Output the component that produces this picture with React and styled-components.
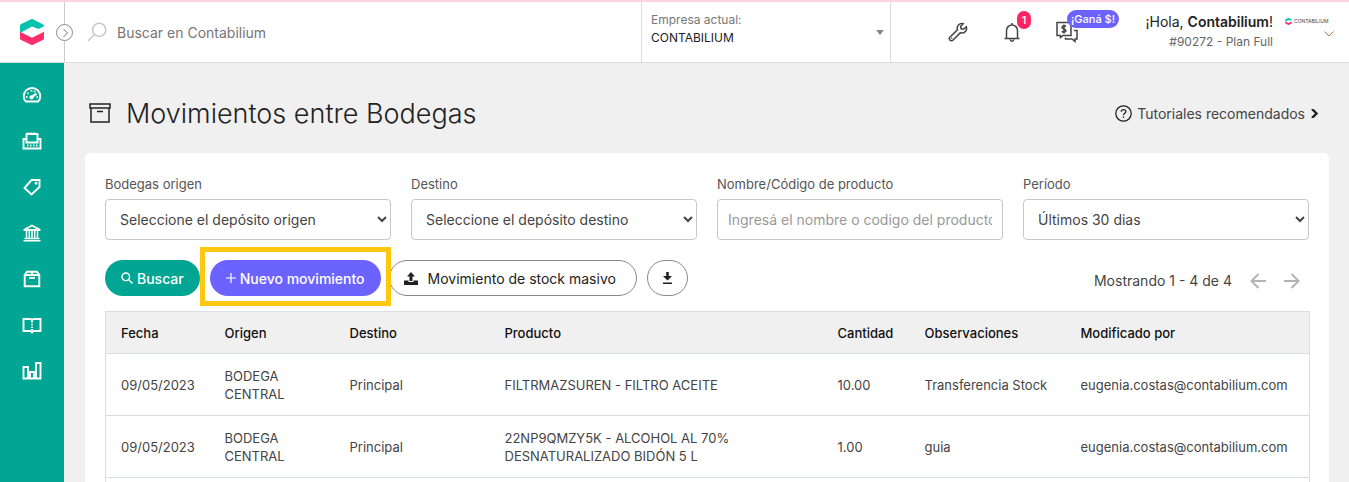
import React, { useState } from 'react';
import styled, { createGlobalStyle, css } from 'styled-components';

const filters = [
  { id: 'origen', label: 'Bodegas origen', options: ['Seleccione el depósito origen', 'BODEGA CENTRAL', 'Principal'] },
  { id: 'destino', label: 'Destino', options: ['Seleccione el depósito destino', 'BODEGA CENTRAL', 'Principal'] },
  { id: 'producto', label: 'Nombre/Código de producto', placeholder: 'Ingresá el nombre o codigo del producto' },
  { id: 'periodo', label: 'Período', options: ['Últimos 30 dias', 'Últimos 15 dias', 'Últimos 7 dias'] },
];

const columns = [
  { title: 'Fecha', width: 104 },
  { title: 'Origen', width: 125 },
  { title: 'Destino', width: 155 },
  { title: 'Producto', width: 333 },
  { title: 'Cantidad', width: 87 },
  { title: 'Observaciones', width: 156 },
  { title: 'Modificado por', width: 244 },
];

const rows = [
  ['09/05/2023', 'BODEGA CENTRAL', 'Principal', 'FILTRMAZSUREN - FILTRO ACEITE', '10.00', 'Transferencia Stock', 'eugenia.costas@contabilium.com'],
  ['09/05/2023', 'BODEGA CENTRAL', 'Principal', '22NP9QMZY5K - ALCOHOL AL 70% DESNATURALIZADO BIDÓN 5 L', '1.00', 'guia', 'eugenia.costas@contabilium.com'],
  ['', '', '', '', '', '', ''],
];

const LogoMark = ({ size }) => (
  <svg width={size} height={size} viewBox="0 0 26 26" aria-hidden="true">
    <path d="M1 14V6.500Q1 5.600 1.800 5.200L12 .3q1-.5 2 0L25 6v1.200L19.500 10 13 7.600z" fill="#00c4ae" />
    <path d="M1 12.800l12 6 12-6V19.500q0 .8-.8 1.200L14 25.700q-1 .5-2 0L1.800 20.700Q1 20.300 1 19.500z" fill="#ff2d6b" />
  </svg>
);

const Stroke = ({ size = 20, box = 20, width = 1, children }) => (
  <svg
    width={size}
    height={size}
    viewBox={`0 0 ${box} ${box}`}
    fill="none"
    stroke="currentColor"
    strokeWidth={width}
    aria-hidden="true"
  >
    {children}
  </svg>
);

const menu = [
  {
    name: 'Tablero',
    icon: (
      <>
        <path d="M4 16.500C2.500 15.200 1.700 13 1.700 11.300a8.300 8.300 0 0 1 16.600 0c0 1.700-.8 3.900-2.300 5.200z" />
        <path d="M9.500 12.300l5-3.800" strokeWidth="2.200" />
        <path d="M4 12h1.500M5.300 8l1.200.8M9.500 5v1.500M14.500 12H16M13 6l-.7 1" />
        <circle cx="9.500" cy="12.300" r="1.200" fill="currentColor" />
      </>
    ),
  },
  {
    name: 'Ventas',
    icon: (
      <>
        <path d="M4.500 8H1.500v9.500h17V8h-3" />
        <path d="M4.500 11.500V3h11v8.500z" />
        <path d="M5 14.500h1.500M8 14.500h1.500M11 14.500h1.500M14 14.500h1.500M6 1.500v1.500M9 1.500v1.500M12 1.500v1.500" />
      </>
    ),
  },
  {
    name: 'Compras',
    icon: (
      <>
        <path d="M17.500 3v7L9.500 17.500 2.500 11l7-8z" />
        <circle cx="14" cy="6.200" r=".5" fill="currentColor" />
      </>
    ),
  },
  {
    name: 'Tesorería',
    icon: (
      <>
        <path d="M2.500 6.500L10 2.500l7.500 4v.5h-15z" />
        <path d="M4.500 8v7M7.300 8v7M10 8v7M12.700 8v7M15.500 8v7" strokeWidth="1.500" />
        <path d="M2.500 15.500h15M1.500 17.800h17" strokeWidth="1.500" />
      </>
    ),
  },
  {
    name: 'Inventario',
    icon: (
      <>
        <path d="M2.700 6v11.300h14.600V6z" />
        <path d="M2.700 6L5 2.700h10L17.300 6M10 2.700V6M7 8.900h6" />
      </>
    ),
  },
  {
    name: 'Contabilidad',
    icon: (
      <>
        <path d="M1.500 4H8.500L10 5l1.500-1h7v12h-7L10 17.500 8.500 16h-7z" />
        <path d="M10 6v10" strokeDasharray="1.500 1.200" />
      </>
    ),
  },
  {
    name: 'Reportes',
    icon: (
      <>
        <path d="M1.500 6h4.500v11.500h-4.500zM8 11h4v6.500h-4zM14 2h4.500v15.500H14z" />
      </>
    ),
  },
];

function Filter({ id, label, options, placeholder }) {
  return (
    <Field>
      <label htmlFor={id}>{label}</label>
      {options ? (
        <Select id={id}>
          {options.map((option) => <option key={option}>{option}</option>)}
        </Select>
      ) : (
        <Input id={id} type="text" placeholder={placeholder} />
      )}
    </Field>
  );
}

function TopBar() {
  return (
    <Header>
      <LogoCell>
        <LogoMark size={26} />
        <Toggle type="button" aria-label="Expandir menú">
          <Stroke size={16} box={16}>
            <path d="M6.500 4L10.500 8l-4 4" />
          </Stroke>
        </Toggle>
      </LogoCell>
      <Search>
        <Stroke width={1.5}>
          <circle cx="12.200" cy="7.800" r="6.600" />
          <path d="M7.500 12.500L1 19" />
        </Stroke>
        <input type="search" aria-label="Buscar" placeholder="Buscar en Contabilium" />
      </Search>
      <Company>
        <div>
          <label htmlFor="empresa">Empresa actual:</label>
          <select id="empresa">
            <option>CONTABILIUM</option>
          </select>
        </div>
        <svg width="8" height="5" viewBox="0 0 8 5" aria-hidden="true">
          <path d="M0 0h8L4 5z" fill="#888" />
        </svg>
      </Company>
      <Tools>
        <IconButton type="button" aria-label="Configuración">
          <Stroke width={1.5}>
            <path d="M18.300 4.800l-2.800 2.500-2.400-.5-.5-2.300 2.600-2.800a4.600 4.600 0 0 0-5.700 6L1.800 15.200a1.900 1.900 0 0 0 0 2.700l.4.400a1.900 1.900 0 0 0 2.700 0l7.500-7.600a4.600 4.600 0 0 0 5.900-5.900z" />
            <path d="M3.700 16.300h.1" strokeLinecap="round" />
          </Stroke>
        </IconButton>
        <IconButton type="button" aria-label="Notificaciones">
          <Stroke width={1.5}>
            <path d="M2.500 16.500h15M4.500 16.500V8.500a5.500 5.500 0 0 1 11 0v8M10 3V1M8.300 17.500a1.700 1.700 0 0 0 3.400 0" />
          </Stroke>
          <Badge $color="#ff2463" $left="15px">1</Badge>
        </IconButton>
        <IconButton type="button" aria-label="Referidos">
          <Stroke size={22} box={22} width={1.5}>
            <path d="M1 1.500h14v13H7l-2.500 2v-2H1z" />
            <path d="M18 9.500h3v8.500h-2v2.500L16 18H9.500v-1.500" />
            <path d="M10 5.500C8 4.200 6 5 6 6.200c0 2.200 4 1.300 4 3.600 0 1.400-2.500 1.900-4.200.6M8 3.500v9" />
          </Stroke>
          <Badge $color="#6c63ff" $left="11px">¡Ganá $!</Badge>
        </IconButton>
      </Tools>
      <User>
        <UserText>
          <span>¡Hola, <strong>Contabilium</strong>!</span>
          <small>#90272 - Plan Full</small>
        </UserText>
        <MiniLogo>
          <span>
            <LogoMark size={7} />
            CONTABILIUM
          </span>
          <button type="button" aria-label="Cuenta">
            <Stroke size={10} box={10}>
              <path d="M.5 2.500L5 7l4.500-4.500" />
            </Stroke>
          </button>
        </MiniLogo>
      </User>
    </Header>
  );
}

function App() {
  const [active, setActive] = useState('Inventario');

  return (
    <Shell>
      <GlobalStyle />
      <TopBar />
      <Body>
        <Sidebar>
          {menu.map(({ name, icon }) => (
            <a key={name} href={`#${name}`} aria-label={name} aria-current={active === name} onClick={() => setActive(name)}>
              <Stroke width={1.9}>{icon}</Stroke>
            </a>
          ))}
        </Sidebar>
        <Main>
          <TitleRow>
            <Stroke size={22} box={22} width={1.5}>
              <path d="M1 2h20v4H1zM2 6v14h18V6M8 9.500h6" />
            </Stroke>
            <h1>Movimientos entre Bodegas</h1>
            <a href="#tutoriales">
              <Stroke size={17} box={17} width={1.3}>
                <circle cx="8.500" cy="8.500" r="7.700" />
                <path d="M6.200 6.800c0-3 4.600-2.800 4.600-.1 0 1.600-2.300 1.700-2.300 3.500M8.500 11.500V13" />
              </Stroke>
              Tutoriales recomendados
              <Stroke size={9} box={9} width={2.4}>
                <path d="M2 0l4.500 4.500L2 9" />
              </Stroke>
            </a>
          </TitleRow>
          <Card>
            <Filters>
              {filters.map((filter) => <Filter key={filter.id} {...filter} />)}
            </Filters>
            <Actions>
              <Button type="button" $color="#00a693">
                <Stroke size={12} box={12} width={1.4}>
                  <circle cx="4.800" cy="4.800" r="3.800" />
                  <path d="M7.500 7.500l4 4" />
                </Stroke>
                Buscar
              </Button>
              <Highlight>
                <Button type="button" $color="#6c63ff">
                  <Stroke size={10} box={10} width={1.2}>
                    <path d="M5 0v10M0 5h10" />
                  </Stroke>
                  Nuevo movimiento
                </Button>
              </Highlight>
              <Button type="button" $wide>
                <svg width="14" height="13" viewBox="0 0 14 13" fill="currentColor" aria-hidden="true">
                  <path d="M7 0l4 4.500H8.500V9h-3V4.500H3zM0 8.500h4.500V10h5V8.500H14V13H0z" />
                </svg>
                Movimiento de stock masivo
              </Button>
              <Button type="button" $round aria-label="Descargar">
                <svg width="9" height="12" viewBox="0 0 9 12" fill="currentColor" aria-hidden="true">
                  <path d="M3.200 0h2.600v4H9L4.500 8.500 0 4h3.200zM0 10.500h9V12H0z" />
                </svg>
              </Button>
              <Pager>
                <span>Mostrando 1 - 4 de 4</span>
                <button type="button" aria-label="Anterior">
                  <Stroke size={16} box={16} width={2}>
                    <path d="M16 8H2M8.500 1L1.500 8l7 7" />
                  </Stroke>
                </button>
                <button type="button" aria-label="Siguiente">
                  <Stroke size={16} box={16} width={2}>
                    <path d="M0 8h14M7.500 1l7 7-7 7" />
                  </Stroke>
                </button>
              </Pager>
            </Actions>
            <Table>
              <colgroup>
                {columns.map(({ title, width }) => <Col key={title} $width={width} />)}
              </colgroup>
              <thead>
                <tr>
                  {columns.map(({ title }) => <th key={title} scope="col">{title}</th>)}
                </tr>
              </thead>
              <tbody>
                {rows.map((row, i) => (
                  <tr key={i}>
                    {row.map((cell, j) => <td key={columns[j].title}>{cell}</td>)}
                  </tr>
                ))}
              </tbody>
            </Table>
          </Card>
        </Main>
      </Body>
    </Shell>
  );
}

const GlobalStyle = createGlobalStyle`
  * {
    box-sizing: border-box;
  }

  body {
    margin: 0;
    background: #f0f0f0;
    color: #444444;
    font-family: Inter, 'Open Sans', sans-serif;
    font-size: 14px;
  }

  button, input, select {
    font: inherit;
    color: inherit;
  }

  button {
    cursor: pointer;
  }

  svg {
    display: block;
    flex: none;
  }
`;

const Shell = styled.div`
  display: flex;
  flex-direction: column;
  height: 100vh;
  overflow: hidden;
  border-top: 2px solid #ffd2df;
`;

const Header = styled.header`
  display: flex;
  flex: none;
  height: 61px;
  background: #ffffff;
  border-bottom: 1px solid #dcdcdc;
`;

const LogoCell = styled.div`
  position: relative;
  display: flex;
  align-items: center;
  justify-content: center;
  width: 65px;
  border-right: 1px solid #cccccc;
`;

const Toggle = styled.button`
  position: absolute;
  right: -9px;
  display: grid;
  place-items: center;
  width: 17px;
  height: 17px;
  padding: 0;
  color: #777777;
  background: #ffffff;
  border: 1px solid #888888;
  border-radius: 50%;
`;

const Search = styled.div`
  display: flex;
  flex: 1;
  align-items: center;
  gap: 10px;
  padding-left: 22px;
  color: #c8c8c8;

  input {
    flex: 1;
    padding: 0;
    color: #757575;
    background: transparent;
    border: 0;
    outline: 0;
  }

  input::placeholder {
    color: #757575;
  }
`;

const Company = styled.div`
  display: flex;
  align-items: center;
  justify-content: space-between;
  width: 250px;
  padding: 0 6px 0 9px;
  border: solid #dcdcdc;
  border-width: 0 1px;

  div {
    flex: 1;
    margin-bottom: 6px;
  }

  label {
    display: block;
    color: #777777;
    font-size: 12px;
    line-height: 18px;
  }

  select {
    display: block;
    width: 100%;
    padding: 0;
    color: #222222;
    font-size: 12px;
    line-height: 18px;
    background: transparent;
    border: 0;
    appearance: none;
  }
`;

const Tools = styled.div`
  display: flex;
  align-items: center;
  gap: 34px;
  padding-left: 57px;
`;

const IconButton = styled.button`
  position: relative;
  padding: 0;
  color: #444444;
  background: none;
  border: 0;
`;

const Badge = styled.span`
  position: absolute;
  top: -11px;
  left: ${({ $left }) => $left};
  min-width: 14px;
  padding: 0 4px;
  color: #ffffff;
  font-size: 11px;
  font-weight: 500;
  line-height: 18px;
  white-space: nowrap;
  background: ${({ $color }) => $color};
  border-radius: 9px;
`;

const User = styled.div`
  display: flex;
  align-items: center;
  gap: 12px;
  width: 271px;
  padding-right: 15px;
  justify-content: flex-end;
`;

const UserText = styled.div`
  display: flex;
  flex-direction: column;
  align-items: flex-end;
  color: #222222;
  line-height: 20px;

  strong {
    font-weight: 600;
  }

  small {
    color: #666666;
    font-size: 12px;
  }
`;

const MiniLogo = styled.div`
  display: flex;
  flex-direction: column;
  align-items: flex-end;
  gap: 4px;
  width: 49px;
  margin-top: -8px;

  span {
    display: flex;
    align-items: center;
    align-self: flex-start;
    gap: 2px;
    color: #444444;
    font-size: 5px;
  }

  button {
    padding: 0;
    color: #b07840;
    background: none;
    border: 0;
  }
`;

const Body = styled.div`
  display: flex;
  flex: 1;
  min-height: 0;
`;

const Sidebar = styled.nav`
  flex: none;
  width: 64px;
  padding-top: 9px;
  background: #00a693;

  a {
    display: grid;
    place-items: center;
    height: 46px;
    color: #ffffff;
  }
`;

const Main = styled.main`
  flex: 1;
  min-width: 0;
  padding: 0 20px 0 21px;
`;

const TitleRow = styled.div`
  display: flex;
  align-items: center;
  height: 90px;
  padding: 10px 10px 0 4px;
  color: #222222;

  h1 {
    flex: 1;
    margin: 0 0 0 15px;
    font-size: 27px;
    font-weight: 300;
  }

  a {
    display: flex;
    align-items: center;
    gap: 5px;
    color: #444444;
    text-decoration: none;
  }

  a svg {
    color: #222222;
  }
`;

const Card = styled.section`
  min-height: 100%;
  padding: 20px;
  background: #ffffff;
  border-radius: 5px;
`;

const Filters = styled.div`
  display: grid;
  grid-template-columns: repeat(4, 1fr);
  gap: 20px;
`;

const Field = styled.div`
  min-width: 0;

  label {
    display: block;
    margin-bottom: 4px;
    color: #555555;
    font-size: 13px;
    line-height: 22px;
  }
`;

const control = css`
  display: block;
  width: 100%;
  height: 41px;
  color: #444444;
  background: #ffffff;
  border: 1px solid #c8c8c8;
  border-radius: 4px;
`;

const Select = styled.select`
  ${control}
  padding: 0 0 0 10px;
`;

const Input = styled.input`
  ${control}
  padding: 0 10px;

  &::placeholder {
    color: #999999;
  }
`;

const Actions = styled.div`
  display: flex;
  align-items: center;
  gap: 10px;
  margin: 20px 0 15px;
`;

const buttonPadding = ({ $wide, $round }) => {
  if ($wide) return '0 20px 0 14px';
  return $round ? '0 15px' : '0 16px';
};

const Button = styled.button`
  display: flex;
  align-items: center;
  justify-content: center;
  gap: ${({ $wide }) => ($wide ? '10px' : '4px')};
  height: 36px;
  padding: ${buttonPadding};
  color: ${({ $color }) => ($color ? '#ffffff' : '#222222')};
  font-weight: ${({ $color }) => ($color ? 500 : 400)};
  white-space: nowrap;
  background: ${({ $color }) => $color || '#ffffff'};
  border: ${({ $color }) => ($color ? '0' : '1px solid #888888')};
  border-radius: 18px;
`;

// Yellow frame drawn around the main action
const Highlight = styled.div`
  position: relative;
  z-index: 1;
  margin-right: -2px;

  &::after {
    content: '';
    position: absolute;
    inset: -13px -10px -10px;
    border: 5px solid #ffc710;
    pointer-events: none;
  }
`;

const Pager = styled.div`
  display: flex;
  align-items: center;
  gap: 18px;
  margin-left: auto;
  padding: 5px 9px 0 0;

  button {
    padding: 0;
    color: #b4b4b4;
    background: none;
    border: 0;
  }
`;

const Table = styled.table`
  width: 100%;
  table-layout: fixed;
  border-collapse: collapse;
  border: 1px solid #d8dee4;
  font-size: 13px;
  line-height: 18px;

  th {
    height: 42px;
    padding: 0 15px;
    color: #111111;
    font-weight: 500;
    text-align: left;
    background: #f0f0f0;
  }

  td {
    height: 62px;
    padding: 0 15px;
    border-top: 1px solid #d8dee4;
  }
`;

const Col = styled.col`
  width: ${({ $width }) => $width}px;
`;

export default App;
